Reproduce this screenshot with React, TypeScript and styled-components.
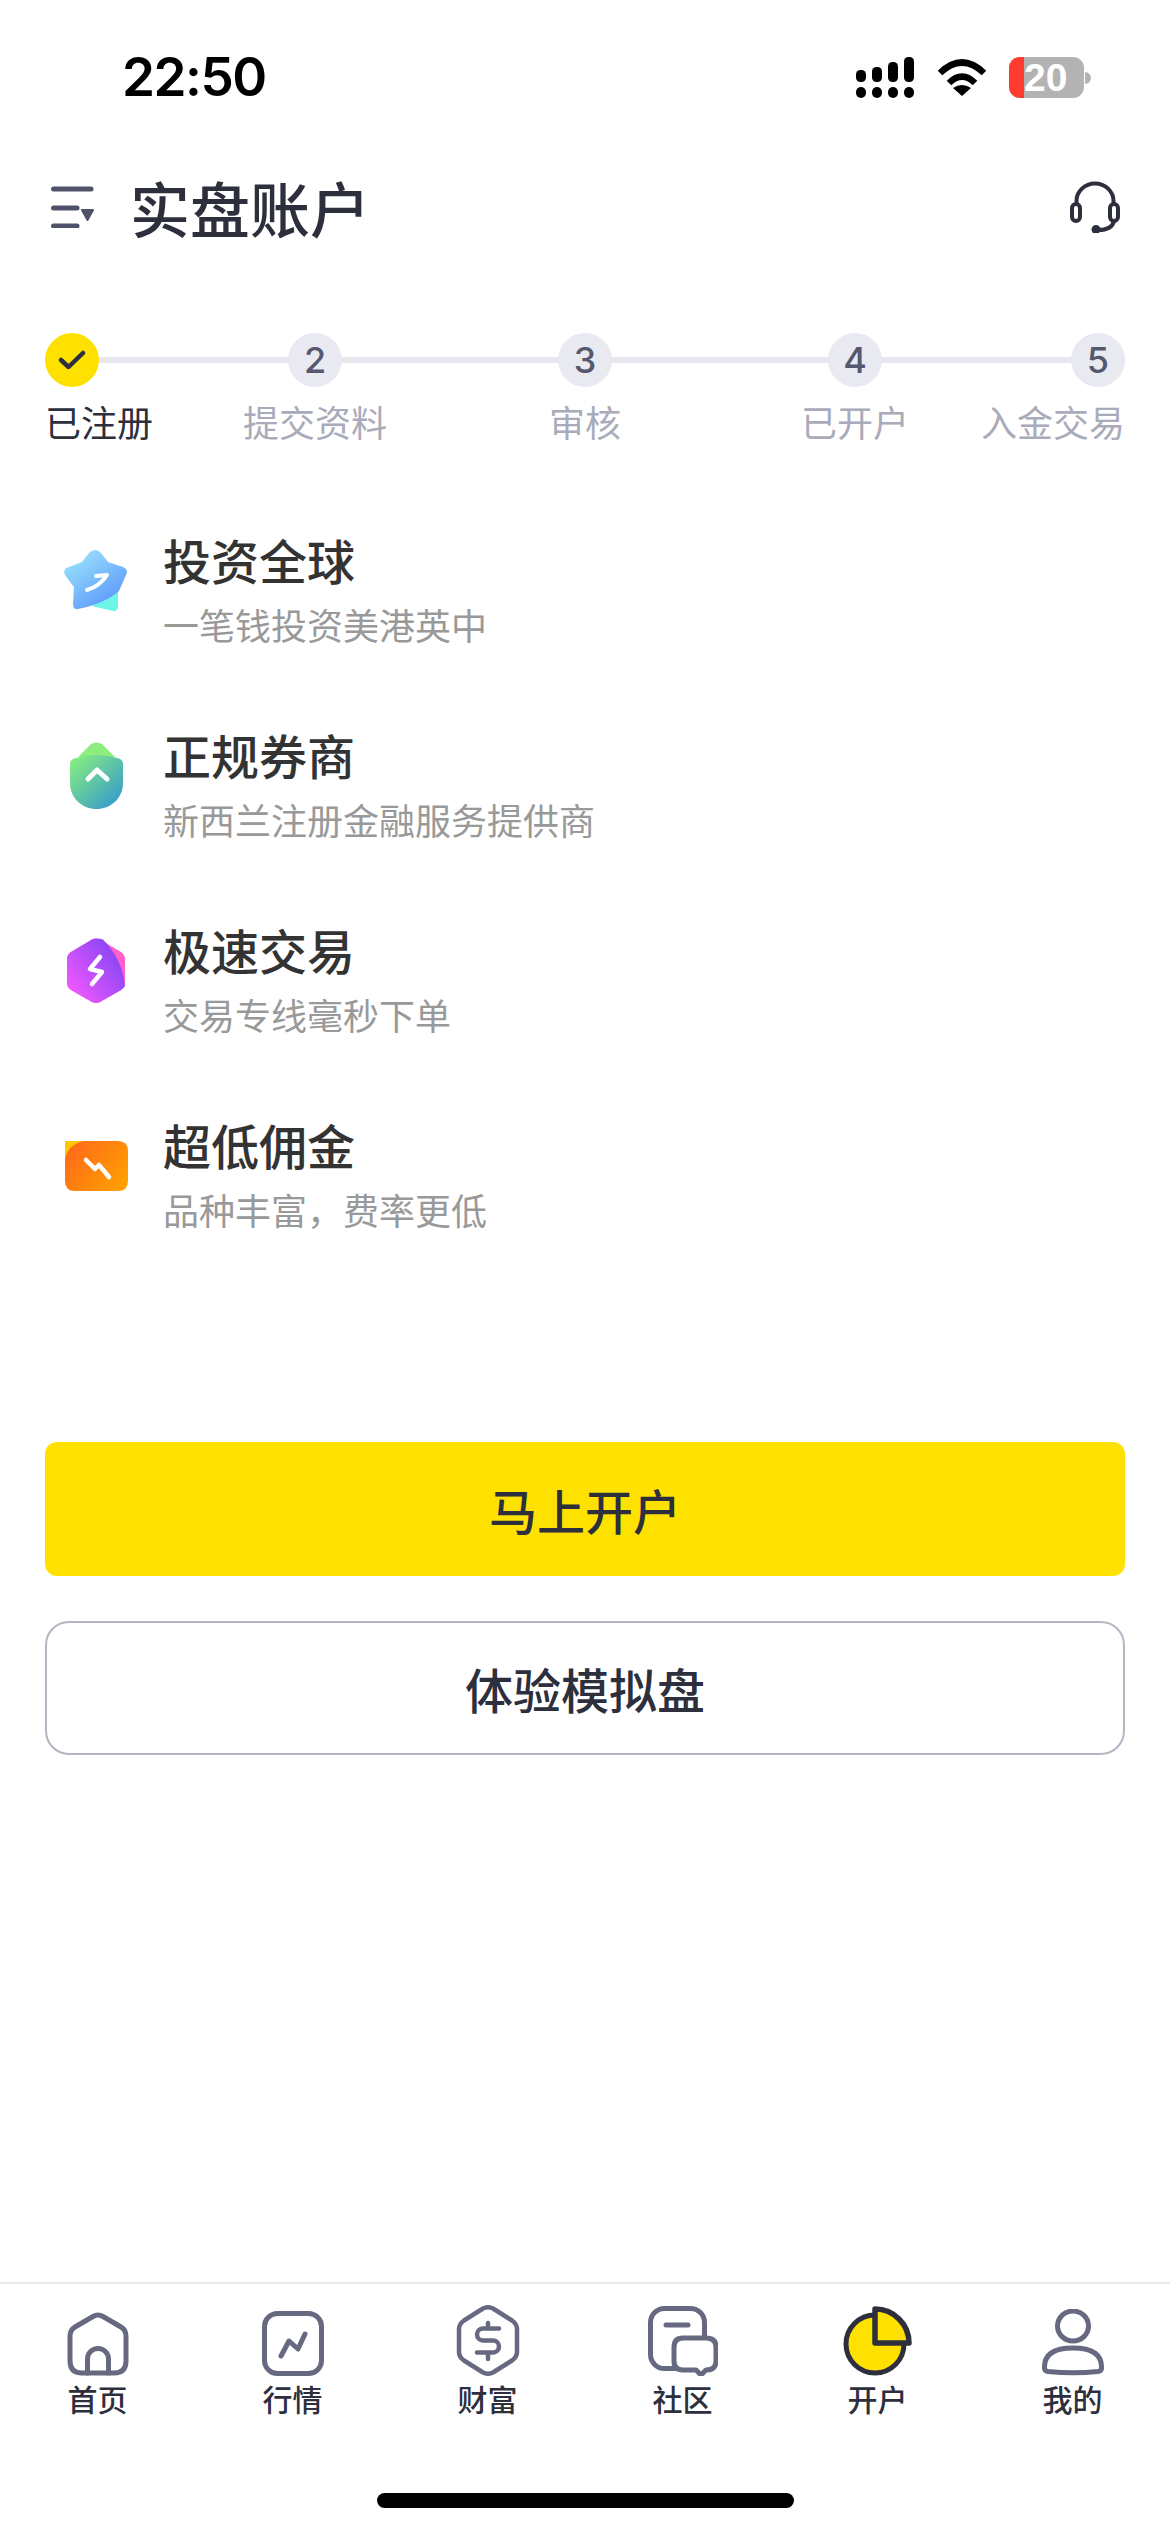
import React from "react";
import styled, { createGlobalStyle } from "styled-components";

const FONT = `"Inter", "Noto Sans CJK SC", "Noto Sans", sans-serif`;
const CJK = `"Noto Sans CJK SC", "Noto Sans", sans-serif`;

const Global = createGlobalStyle`
  html, body { margin: 0; padding: 0; background: #fff; }
  * { box-sizing: border-box; }
`;

const Page = styled.div`
  width: 1170px;
  height: 2532px;
  background: #fff;
  display: flex;
  flex-direction: column;
  overflow: hidden;
  font-family: ${CJK};
`;

const StatusBar = styled.div`
  height: 41px;
  margin-top: 57px;
  padding: 0 79px 0 122px;
  display: flex;
  align-items: center;
  justify-content: space-between;
`;
const Clock = styled.div`
  font-family: "Inter", "Liberation Sans", sans-serif;
  font-weight: 600;
  font-size: 53px;
  letter-spacing: -1.5px;
  line-height: 41px;
  color: #000;
`;
const StatusIcons = styled.div`
  display: flex;
  align-items: center;
  gap: 22px;
`;
const BatteryWrap = styled.div`
  display: flex;
  align-items: center;
  gap: 1px;
`;
const BatteryBody = styled.div`
  width: 75px;
  height: 41px;
  border-radius: 11px;
  background: #b3b3b3;
  overflow: hidden;
  display: flex;
  align-items: center;
`;
const BatteryLow = styled.div`
  width: 15px;
  height: 100%;
  background: #ff3b30;
`;
const BatteryText = styled.div`
  font-family: "Liberation Sans", sans-serif;
  font-weight: 700;
  font-size: 39px;
  line-height: 41px;
  color: #fff;
`;
const BatteryTip = styled.div`
  width: 6px;
  height: 12px;
  background: #b3b3b3;
  border-radius: 0 6px 6px 0;
`;

const Header = styled.div`
  margin-top: 80px;
  height: 57px;
  padding: 0 50px 0 51px;
  display: flex;
  align-items: center;
`;
const PageTitle = styled.h1`
  margin: 0 0 0 35px;
  flex: 1;
  font-size: 60px;
  line-height: 57px;
  font-weight: 500;
  color: #2d2f3d;
`;

const Steps = styled.div`
  position: relative;
  margin: 98px 45px 0;
  display: grid;
  grid-template-columns: 135px 270px 270px 270px 135px;
  &::before {
    content: "";
    position: absolute;
    left: 27px;
    right: 27px;
    top: 24px;
    height: 6px;
    background: #e6e6ec;
  }
`;
const Step = styled.div<{ $align: string }>`
  position: relative;
  display: flex;
  flex-direction: column;
  align-items: ${(p) => p.$align};
  white-space: nowrap;
`;
const StepDot = styled.div<{ $done?: boolean }>`
  width: 54px;
  height: 54px;
  border-radius: 50%;
  background: ${(p) => (p.$done ? "#ffe100" : "#e9eaf1")};
  display: flex;
  align-items: center;
  justify-content: center;
  font-family: ${FONT};
  font-size: 36px;
  font-weight: 500;
  color: #55586f;
`;
const StepLabel = styled.div<{ $done?: boolean }>`
  margin-top: 8px;
  font-size: 36px;
  line-height: 52px;
  color: ${(p) => (p.$done ? "#2d2f3d" : "#a9abba")};
`;

const Features = styled.div`
  margin-top: 77px;
  padding: 0 0 0 64px;
  display: flex;
  flex-direction: column;
`;
const Feature = styled.div`
  height: 195px;
  display: flex;
  align-items: flex-start;
`;
const FeatureIcon = styled.div`
  width: 64px;
  height: 100%;
  display: flex;
  justify-content: center;
  align-items: center;
  padding-bottom: 82px;
`;
const FeatureBody = styled.div`
  margin-left: 35px;
  display: flex;
  flex-direction: column;
`;
const FeatureTitle = styled.div`
  font-size: 48px;
  line-height: 70px;
  font-weight: 500;
  color: #333;
`;
const FeatureSub = styled.div`
  margin-top: 4px;
  font-size: 36px;
  line-height: 52px;
  color: #999;
`;

const Actions = styled.div`
  margin-top: 138px;
  padding: 0 45px;
  display: flex;
  flex-direction: column;
  gap: 45px;
`;
const PrimaryButton = styled.button`
  height: 134px;
  border: 0;
  border-radius: 12px;
  background: #ffe100;
  font-family: ${CJK};
  font-size: 48px;
  font-weight: 500;
  color: #2d2f3d;
`;
const SecondaryButton = styled(PrimaryButton)`
  background: #fff;
  border: 2px solid #b4b5c3;
  border-radius: 24px;
`;

const TabBar = styled.nav`
  margin-top: auto;
  height: 250px;
  border-top: 2px solid #e8e8ec;
  display: flex;
  flex-direction: column;
`;
const Tabs = styled.div`
  display: grid;
  grid-template-columns: repeat(6, 195px);
`;
const Tab = styled.div`
  display: flex;
  flex-direction: column;
  align-items: center;
`;
const TabIconBox = styled.div`
  height: 72px;
  margin-top: 20px;
  display: flex;
  align-items: flex-end;
`;
const TabLabel = styled.div`
  margin-top: 0;
  font-size: 30px;
  line-height: 44px;
  font-weight: 500;
  color: #2d2f3d;
`;
const HomeBar = styled.div`
  width: 417px;
  height: 15px;
  margin: auto auto 24px;
  border-radius: 8px;
  background: #000;
`;

const Line = { fill: "none", stroke: "#666980", strokeWidth: 5, strokeLinecap: "round", strokeLinejoin: "round" } as const;
const WhiteLine = { fill: "none", stroke: "#fff", strokeWidth: 5, strokeLinecap: "round", strokeLinejoin: "round" } as const;
const DARK = "#2d2f3d";

const SignalIcon = () => (
  <svg width="59" height="41" viewBox="0 0 59 41">
    <rect x="0" y="13" width="10" height="12" rx="4.5" />
    <rect x="16" y="10" width="10" height="15" rx="4.5" />
    <rect x="32" y="5" width="10" height="20" rx="4.5" />
    <rect x="48" y="0" width="10" height="25" rx="4.5" />
    <rect x="0" y="30" width="10" height="11" rx="5" />
    <rect x="16" y="30" width="10" height="11" rx="5" />
    <rect x="32" y="30" width="10" height="11" rx="5" />
    <rect x="48" y="30" width="10" height="11" rx="5" />
  </svg>
);
const WifiIcon = () => (
  <svg width="50" height="38" viewBox="0 0 50 38">
    <path d="M3 14 Q25 -7 47 14" fill="none" stroke="#000" strokeWidth="6.5" />
    <path d="M12 24 Q25 11 38 24" fill="none" stroke="#000" strokeWidth="6.5" />
    <path d="M25 37 L16 29 Q25 23 34 29 Z" />
  </svg>
);
const MenuIcon = () => (
  <svg width="44" height="42" viewBox="0 0 44 42">
    <g fill="none" stroke="#4f5268" strokeWidth="5" strokeLinecap="round">
      <path d="M2.5 3 H40" />
      <path d="M2.5 22 H26" />
      <path d="M2.5 40 H26" />
    </g>
    <path d="M31 24 H42 L36.5 34 Z" fill="#4f5268" stroke="#4f5268" strokeWidth="2" strokeLinejoin="round" />
  </svg>
);
const HeadsetIcon = () => (
  <svg width="50" height="52" viewBox="0 0 50 52" fill="none" stroke={DARK} strokeWidth="4" strokeLinecap="round">
    <path d="M6.500 23 V20 A18.500 17.500 0 0 1 43.500 20 V23" />
    <rect x="2" y="23" width="8" height="17" rx="4" />
    <rect x="40" y="23" width="8" height="17" rx="4" />
    <path d="M44 40 Q42 49 28 49" />
    <circle cx="26" cy="48.500" r="2.500" fill={DARK} />
  </svg>
);
const CheckIcon = () => (
  <svg width="28" height="20" viewBox="0 0 28 20" fill="none" stroke={DARK} strokeWidth="4.5" strokeLinecap="round" strokeLinejoin="round">
    <path d="M3 10 L10.5 17 L25 3" />
  </svg>
);

const StarIcon = () => (
  <svg width="64" height="63" viewBox="0 0 64 63">
    <defs>
      <linearGradient id="star" x1="0.15" y1="0.05" x2="0.8" y2="0.95">
        <stop offset="0" stopColor="#9be3fb" />
        <stop offset="1" stopColor="#5b95fb" />
      </linearGradient>
    </defs>
    <path d="M28 57 L49 62 Q54 63 54 57 L54 38 Z" fill="#6ef5ea" />
    <path d="M25 4 Q31 -2 37 4 L44 13 L59 18 Q65 21 62 26 L55 42 Q42 54 14 60 Q9 61 9 55 L10 38 L1 26 Q-2 20 5 18 L18 13 Z" fill="url(#star)" />
    <path d="M23 41 Q36 37 43 26 L32 27" fill="none" stroke="#fff" strokeWidth="4" strokeLinecap="round" strokeLinejoin="round" />
  </svg>
);
const ShieldIcon = () => (
  <svg width="53" height="67" viewBox="0 0 53 67">
    <defs>
      <linearGradient id="shield" x1="0.05" y1="0.1" x2="0.85" y2="0.95">
        <stop offset="0" stopColor="#85ec83" />
        <stop offset="1" stopColor="#379cc9" />
      </linearGradient>
    </defs>
    <path d="M21 2 Q26.500 -1 32 2 L45 15 H8 Z" fill="#8dee7f" />
    <path d="M0 22 Q0 17 6 16 Q26 10 47 16 Q53 17 53 22 V41 C53 57 40 67 26.500 67 C13 67 0 57 0 41 Z" fill="url(#shield)" />
    <path d="M18 37 L27 28 L37 37" {...WhiteLine} />
  </svg>
);
const HexIcon = () => (
  <svg width="59" height="66" viewBox="0 0 59 66">
    <defs>
      <linearGradient id="hex" x1="0.1" y1="0.85" x2="0.9" y2="0.2">
        <stop offset="0" stopColor="#ef58ff" />
        <stop offset="1" stopColor="#8545f5" />
      </linearGradient>
    </defs>
    <path d="M25 1.500 Q29 -0.500 33 1.500 L54 14 Q58 17 58 21 V45 Q58 49 54 52 L33 64 Q29 66 25 64 L4 52 Q0 49 0 45 V21 Q0 17 4 14 Z" fill="#ff5fc8" />
    <path d="M25 1.500 Q29 -0.500 36 1.500 C48 14 56 28 58 48 Q57 50 54 52 L33 64 Q29 66 25 64 L4 52 Q0 49 0 45 V21 Q0 17 4 14 Z" fill="url(#hex)" />
    <path d="M33 19 L23 31 L35 34 L25 46" {...WhiteLine} strokeWidth="4.5" />
  </svg>
);
const CardIcon = () => (
  <svg width="63" height="50" viewBox="0 0 63 50">
    <defs>
      <linearGradient id="card" x1="0" y1="0.2" x2="1" y2="0.8">
        <stop offset="0" stopColor="#ff6a1a" />
        <stop offset="1" stopColor="#ffa000" />
      </linearGradient>
    </defs>
    <path d="M0 0 H30 V30 H0 Z" fill="#ffc800" />
    <path d="M0 18 Q3 3 19 0 H53 Q63 0 63 10 V40 Q63 50 53 50 H10 Q0 50 0 40 Z" fill="url(#card)" />
    <path d="M21 19 L30 28 L34 24 L44 36" {...WhiteLine} strokeWidth="4.5" />
  </svg>
);

const HomeIcon = () => (
  <svg width="62" height="64" viewBox="0 0 62 64">
    <path d="M26 4.500 L8 15 Q3 18 3 24 V49 Q3 61 15 61 H47 Q59 61 59 49 V24 Q59 18 54 15 L36 4.500 Q31 1.500 26 4.500 Z" {...Line} />
    <path d="M20.500 61 V47 A10.500 10.500 0 0 1 41.500 47 V61" {...Line} />
  </svg>
);
const ChartIcon = () => (
  <svg width="62" height="65" viewBox="0 0 62 65">
    <rect x="2.500" y="2.500" width="57" height="60" rx="13" {...Line} />
    <path d="M19 45 L27 30 L36 38 L43 23" {...Line} />
  </svg>
);
const MoneyIcon = () => (
  <svg width="64" height="71" viewBox="0 0 64 71">
    <path d="M27 3.500 Q32 1 37 3.500 L56 15.500 Q61 19 61 24 V47 Q61 52 56 55.500 L37 67.500 Q32 70 27 67.500 L8 55.500 Q3 52 3 47 V24 Q3 19 8 15.500 Z" {...Line} strokeWidth={4.5} />
    <path d="M43 23.500 H27 A6 6 0 0 0 27 35.500 H37 A6 6 0 0 1 37 47.500 H21" {...Line} strokeWidth={4.5} />
    <path d="M32 18 V23 M32 48 V54" {...Line} strokeWidth={4.5} />
  </svg>
);
const CommunityIcon = () => (
  <svg width="70" height="70" viewBox="0 0 70 70">
    <rect x="2.500" y="2.500" width="54" height="60" rx="14" {...Line} />
    <path d="M18 19 H40" {...Line} />
    <path d="M35 32 H58 Q68 32 68 41 V55 Q68 64 58 64 H58 L53 69 L48 64 H35 Q26 64 26 55 V41 Q26 32 35 32 Z" {...Line} fill="#fff" />
  </svg>
);
const PieIcon = () => (
  <svg width="69" height="70" viewBox="0 0 69 70">
    <circle cx="32" cy="38" r="29" fill="#ffe100" stroke={DARK} strokeWidth="5" />
    <path d="M32 3 V37 H66 A34 34 0 0 0 32 3 Z" fill="#ffe100" stroke={DARK} strokeWidth="5.500" strokeLinejoin="round" />
  </svg>
);
const UserIcon = () => (
  <svg width="64" height="67" viewBox="0 0 64 67">
    <ellipse cx="32" cy="17" rx="15.500" ry="15" {...Line} />
    <path d="M3.500 58 C3.500 44 15 39 32 39 C49 39 60.500 44 60.500 58 Q61 62 57 62.500 Q32 65 7 62.500 Q3 62 3.500 58 Z" {...Line} />
  </svg>
);

const steps = [
  { n: "", label: "已注册", align: "flex-start", done: true },
  { n: "2", label: "提交资料", align: "center" },
  { n: "3", label: "审核", align: "center" },
  { n: "4", label: "已开户", align: "center" },
  { n: "5", label: "入金交易", align: "flex-end" },
];
const features = [
  { icon: <StarIcon />, title: "投资全球", sub: "一笔钱投资美港英中" },
  { icon: <ShieldIcon />, title: "正规券商", sub: "新西兰注册金融服务提供商" },
  { icon: <HexIcon />, title: "极速交易", sub: "交易专线毫秒下单" },
  { icon: <CardIcon />, title: "超低佣金", sub: "品种丰富，费率更低" },
];
const tabs = [
  { icon: <HomeIcon />, label: "首页" },
  { icon: <ChartIcon />, label: "行情" },
  { icon: <MoneyIcon />, label: "财富" },
  { icon: <CommunityIcon />, label: "社区" },
  { icon: <PieIcon />, label: "开户" },
  { icon: <UserIcon />, label: "我的" },
];

export default function App() {
  return (
    <Page>
      <Global />
      <StatusBar>
        <Clock>22:50</Clock>
        <StatusIcons>
          <SignalIcon />
          <WifiIcon />
          <BatteryWrap>
            <BatteryBody>
              <BatteryLow />
              <BatteryText>20</BatteryText>
            </BatteryBody>
            <BatteryTip />
          </BatteryWrap>
        </StatusIcons>
      </StatusBar>
      <Header>
        <MenuIcon />
        <PageTitle>实盘账户</PageTitle>
        <HeadsetIcon />
      </Header>
      <Steps>
        {steps.map((s) => (
          <Step key={s.label} $align={s.align}>
            <StepDot $done={s.done}>{s.done ? <CheckIcon /> : s.n}</StepDot>
            <StepLabel $done={s.done}>{s.label}</StepLabel>
          </Step>
        ))}
      </Steps>
      <Features>
        {features.map((f) => (
          <Feature key={f.title}>
            <FeatureIcon>{f.icon}</FeatureIcon>
            <FeatureBody>
              <FeatureTitle>{f.title}</FeatureTitle>
              <FeatureSub>{f.sub}</FeatureSub>
            </FeatureBody>
          </Feature>
        ))}
      </Features>
      <Actions>
        <PrimaryButton>马上开户</PrimaryButton>
        <SecondaryButton>体验模拟盘</SecondaryButton>
      </Actions>
      <TabBar>
        <Tabs>
          {tabs.map((t) => (
            <Tab key={t.label}>
              <TabIconBox>{t.icon}</TabIconBox>
              <TabLabel>{t.label}</TabLabel>
            </Tab>
          ))}
        </Tabs>
        <HomeBar />
      </TabBar>
    </Page>
  );
}
